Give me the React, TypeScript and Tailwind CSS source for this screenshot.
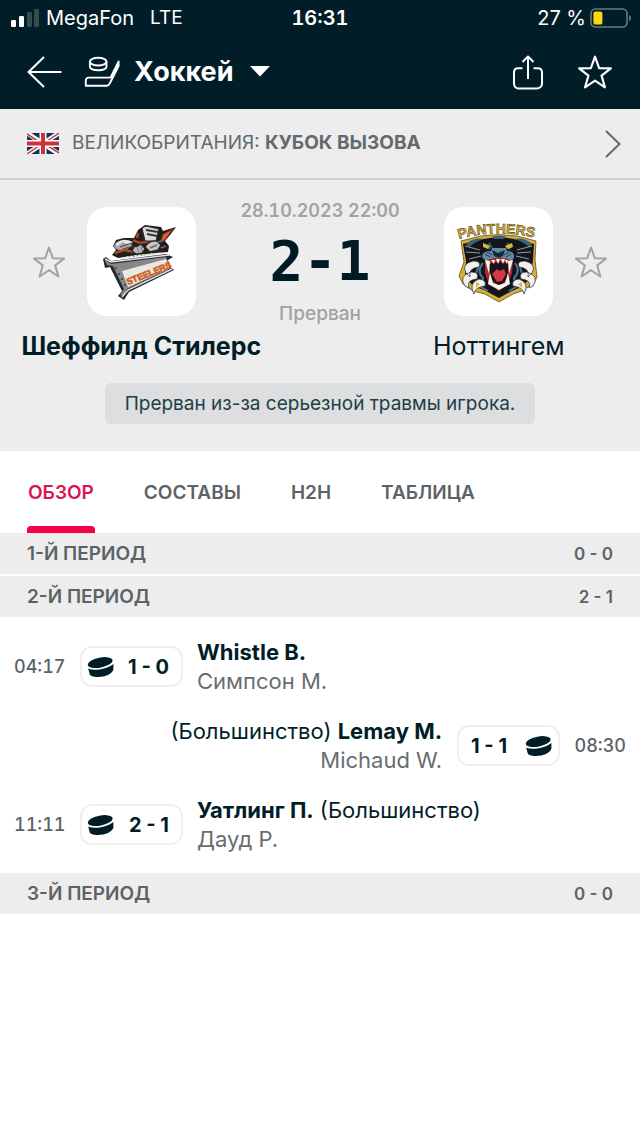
import React from "react";

const STAR = "M17 2.5 L20.9 13.3 L32 13.6 L23.2 20.4 L26.4 31.5 L17 25.1 L7.6 31.5 L10.8 20.4 L2 13.6 L13.1 13.3 Z";

function StarIcon({ className }: { className: string }) {
  return (
    <svg viewBox="0 0 34 34" className={className} fill="none" stroke="currentColor" aria-hidden="true">
      <path d={STAR} strokeLinejoin="round" />
    </svg>
  );
}

function Puck() {
  return (
    <svg viewBox="0 0 28 22" className="h-[22px] w-7 shrink-0" fill="#011e28" aria-hidden="true">
      <ellipse cx="13.2" cy="6.6" rx="12.6" ry="5" transform="rotate(-11 13.2 6.6)" />
      <path d="M1.2 12.6 C6 15.2 20 13.4 26.4 8 L26.4 13.5 C25.5 18 18 21 11 21 C6 21 3 20 2.6 18 Z" />
    </svg>
  );
}

function StatusBar() {
  return (
    <div className="grid h-9 grid-cols-[1fr_auto_1fr] items-center text-[20px] leading-6">
      <div className="flex items-center pl-[11px]">
        <svg viewBox="0 0 29 18" className="h-[18px] w-[29px]" fill="#fff" aria-hidden="true">
          <rect x="0" y="11" width="5" height="7" rx="1.3" />
          <rect x="8" y="7" width="5" height="11" rx="1.3" />
          <rect x="16" y="3" width="5" height="15" rx="1.3" opacity=".2" />
          <rect x="23" y="0" width="5" height="18" rx="1.3" opacity=".2" />
        </svg>
        <span className="ml-1.5">MegaFon</span>
        <span className="ml-4 text-[19px]">LTE</span>
      </div>
      <span className="font-semibold tabular-nums">16:31</span>
      <div className="flex items-center justify-end pr-2">
        <span className="mr-1">27 %</span>
        <svg viewBox="0 0 42 20" className="h-5 w-[42px]" aria-hidden="true">
          <rect x="1" y="1" width="36" height="18" rx="4.5" fill="none" stroke="#687a80" strokeWidth="1.6" />
          <rect x="3.4" y="3.4" width="9" height="13.2" rx="2.2" fill="#ffd60a" />
          <path d="M39 7 Q41 7.5 41 10 Q41 12.5 39 13 Z" fill="#687a80" />
        </svg>
      </div>
    </div>
  );
}

function NavBar() {
  return (
    <div className="flex h-[73px] items-center px-[27px] pb-0.5">
      <button aria-label="Назад">
        <svg viewBox="0 0 36 32" className="h-8 w-9" fill="none" stroke="#fff" strokeWidth="2" aria-hidden="true">
          <path d="M34.5 16 H1.5 M17 1 L1.5 16 L17 31" />
        </svg>
      </button>
      <button className="ml-[21px] flex items-center">
        <svg viewBox="0 0 38 32" className="h-8 w-[38px]" fill="none" stroke="#fff" strokeWidth="1.9" strokeLinejoin="round" aria-hidden="true">
          <ellipse cx="14.2" cy="5.6" rx="8.3" ry="3.9" />
          <path d="M5.9 5.6 V10.6 C6.5 15.4 22 15.4 22.5 10.6 V5.6" />
          <path d="M34.6 5.5 L26.5 21.6 H4.8 C2.6 21.6 1.8 23 1.8 24.6 V29.8 H23 C24.8 29.8 25.2 28.6 26 27 L34.6 10 Z" />
        </svg>
        <span className="ml-3 text-[27px] leading-8 font-bold">Хоккей</span>
        <svg viewBox="0 0 20 11" className="ml-4 h-[11px] w-5" fill="#fff" aria-hidden="true">
          <path d="M0 0 H20 L10 10.5 Z" />
        </svg>
      </button>
      <div className="ml-auto flex items-center gap-[33px]">
        <button aria-label="Поделиться">
          <svg viewBox="0 0 32 36" className="h-9 w-8" fill="none" stroke="#fff" strokeWidth="2" strokeLinejoin="round" aria-hidden="true">
            <path d="M10.5 14.3 H6 Q2 14.3 2 18.5 V30 Q2.5 34 6 34.5 H25 Q29.5 34 30 30 V18.5 Q30 14.3 25.5 14.3 H21.5" />
            <path d="M16 25 V3 M10.5 8 L16 2.5 L21.5 8" />
          </svg>
        </button>
        <button aria-label="В избранное">
          <StarIcon className="h-9 w-9 stroke-2" />
        </button>
      </div>
    </div>
  );
}

function Flag() {
  return (
    <svg viewBox="0 0 32 21" className="h-[21px] w-8 shrink-0" aria-hidden="true">
      <rect width="32" height="21" fill="#12335f" />
      <path d="M0 0 L32 21 M32 0 L0 21" stroke="#fff" strokeWidth="4.6" />
      <path d="M0 1 L14 10 M32 20 L18 11 M32 0 L18 9.5 M0 21 L14 11.5" stroke="#c8413f" strokeWidth="1.5" />
      <path d="M16 0 V21 M0 10.5 H32" stroke="#fff" strokeWidth="7" />
      <path d="M16 0 V21 M0 10.5 H32" stroke="#cc3336" strokeWidth="4" />
    </svg>
  );
}

function SteelersLogo() {
  return (
    <svg viewBox="0 1 84 80" className="h-20 w-[84px]" role="img" aria-label="Шеффилд Стилерс">
      <path d="M12 34 L16 29 L13 25 L16 19 L24 17 L34 17 L38 9 L45 4 L61 6 L63 10 L76 6 L70 14 L65 20 L69 25 L68 31 L48 33 L18 37 Z" fill="#241d1c" />
      <ellipse cx="23" cy="24" rx="9" ry="5" fill="#a9a9ac" transform="rotate(-10 23 24)" />
      <path d="M16 23 Q23 16 33 21 L29 24 L23 21 L17 25 Z" fill="#ece9e5" />
      <path d="M20 26 L32 22 M23 28 L34 25" stroke="#4b4747" strokeWidth="1.2" />
      <path d="M15 32 L24 29 L34 31 M33 19 L40 22 L50 20 M38 12 L37 17" stroke="#ad4a25" strokeWidth="2.4" fill="none" />
      <path d="M42 7 L46 5 L59 8 L56 20 L45 20 Z" fill="#dadadb" stroke="#252426" />
      <path d="M46 9 L58 11 M47 13 L57 15" stroke="#363337" strokeWidth="1.8" />
      <path d="M63 13 L73 8 L65 19 L60 22 Z" fill="#d96129" stroke="#622b19" />
      <path d="M45 26 Q49 19 57 20 L61 24 L58 29 L50 31 Z" fill="#c6c5c6" stroke="#282526" strokeWidth="1.4" />
      <path d="M50 27 L57 24 M58 21 L64 19 M61 27 L66 25" stroke="#6e6b6d" strokeWidth="1.8" />
      <path d="M32 30 L34 26 L38 25 L41 23 L45 28 L42 32 L36 33 Z" fill="#b8b9bc" stroke="#262528" strokeWidth="1.2" />
      <path d="M37 26 L39 31 M41 25 L42 30" stroke="#777a7e" />
      <path d="M22 37 L34 35 L62 32" stroke="#ece8e1" strokeWidth="1.5" strokeDasharray="3 1" />
      <path d="M3 38 L6 36 L11 40 L66 33 L73 36 L68 39 L70 46 L74 49 L29 71 L24 79 L18 75 L22 70 L10 46 L5 47 Z" fill="#24282b" />
      <path d="M5 39 L11 43 L66 36 L71 47 L27 68 L23 75 L20 74 L24 68 L13 45 L7 44 Z" fill="#85898b" />
      <path d="M5 38 L11 41 L69 34 M22 76 L28 69 L72 48" stroke="#dfe1e2" strokeWidth="1.5" fill="none" />
      <path d="M22 50 L66 38 L70 47 L28 66 Z" fill="#ebe8e2" />
      <text x="28" y="64" transform="rotate(-22 28 64)" fill="#eb6c20" stroke="#c45616" strokeWidth=".6" fontFamily="Liberation Sans Narrow, Liberation Sans, sans-serif" fontWeight="700" fontSize="9">STEELERS</text>
      <g fill="#35383a"><circle cx="16" cy="47" r="1" /><circle cx="19" cy="53" r="1" /><circle cx="22" cy="58" r="1" /><circle cx="25" cy="64" r="1" /></g>
    </svg>
  );
}

function PanthersLogo() {
  return (
    <svg viewBox="0 0 86 90" className="h-[90px] w-[86px]" role="img" aria-label="Ноттингем">
      <defs><path id="arch" d="M3 22 Q43 11 84 22" /></defs>
      <path d="M5 24 Q43 11 80 24 L79 43 L81 60 L78 66 L66 74 L57 77 L43 85 L29 77 L17 74 L7 67 L3 59 L8 45 Z" fill="#d8ad3a" stroke="#5d4c1d" strokeWidth=".8" />
      <path d="M7 27 Q43 14 78 27 L77 43 L75 61 L65 70 L56 74 L43 81 L28 73 L17 69 L9 59 L10 44 Z" fill="#12151b" />
      <path d="M10 27 Q18 20 28 22 Q20 24 13 30 Z M76 27 Q68 20 58 22 Q66 24 73 30 Z M35 20 Q43 17 51 20 L47 22 H39 Z" fill="#3d617b" />
      <path d="M29 29 L34 25 L37 30 L33 33 Z M57 29 L52 25 L49 30 L53 33 Z" fill="#314b60" />
      <path d="M27 26 L34 29 L32 32 L27 30 Z M56 26 L49 29 L52 32 L57 30 Z" fill="#d3ba3c" />
      <path d="M26 40 Q26 34 35 34 L36 31 H50 L51 34 Q59 34 58 41 L54 45 Q42 39 31 45 Z" fill="#6089a4" />
      <path d="M36 33 L42 36 L49 33 L47 39 L43 41 L38 39 Z" fill="#182a39" />
      <path d="M29 37 L34 40 M31 35 L36 38 M55 37 L50 40 M53 35 L48 38" stroke="#24394b" />
      <path d="M27 46 Q20 54 27 61 L25 70 L32 74 M59 46 Q65 54 58 61 L60 70 L53 74 M22 50 L19 60 M64 50 L67 60" stroke="#4d7592" strokeWidth="2" fill="none" />
      <path d="M24 33 L9 29 M24 36 L10 35 M25 39 L13 42 M61 33 L76 29 M61 36 L75 35 M60 39 L73 42" stroke="#b8beb9" strokeWidth=".8" />
      <path d="M29 44 Q42 37 57 44 L56 56 L52 67 L43 74 L33 67 L29 56 Z" fill="#ac2932" />
      <path d="M33 47 Q43 43 53 47 L51 62 L43 70 L35 62 Z" fill="#19141a" />
      <path d="M36 57 L41 52 L44 54 L48 52 L50 57 L46 64 L41 65 Z" fill="#d63943" />
      <path d="M29 43 L34 44 L33 57 Z M52 44 L57 43 L53 57 Z M35 43 H39 L38 47 Z M40 42 H44 L42 47 Z M45 42 H49 L47 47 Z M49 43 H52 L51 47 Z M32 67 L34 56 L37 66 L43 68 L49 66 L52 56 L54 67 L43 73 Z" fill="#f9f6ec" />
      <path d="M17 44 Q5 47 10 56 L14 60 Q12 51 23 50 Q26 44 17 44 M15 55 Q2 59 9 69 L13 71 Q10 63 21 62 Q24 55 15 55 M23 62 Q12 66 18 77 Q19 70 29 69 Q31 63 23 62 M69 44 Q81 47 76 56 L72 60 Q74 51 63 50 Q60 44 69 44 M71 55 Q84 59 77 69 L73 71 Q76 63 65 62 Q62 55 71 55 M63 62 Q74 66 68 77 Q67 70 57 69 Q55 63 63 62" fill="#f0f1ee" stroke="#272a2d" strokeWidth=".7" />
      <path d="M20 65 L24 67 L20 71 Z M66 65 L62 67 L66 71 Z" fill="#e0b538" />
      <text fill="#dbb43c" stroke="#5a4817" strokeWidth=".6" fontFamily="Liberation Sans, sans-serif" fontWeight="700" fontSize="14"><textPath href="#arch">PANTHERS</textPath></text>
    </svg>
  );
}

function MatchSummary() {
  return (
    <section className="bg-[#ededed] pb-[27px]">
      <div className="flex items-start justify-between px-8 pt-[19px] text-[#a0a2a3]">
        <div className="flex items-center gap-[21px] pt-2">
          <button aria-label="Следить за Шеффилд Стилерс"><StarIcon className="h-[34px] w-[34px] stroke-2" /></button>
          <div className="flex h-[109px] w-[109px] items-center justify-center rounded-[20px] bg-white"><SteelersLogo /></div>
        </div>
        <div className="flex flex-col items-center text-center">
          <time className="text-[18px] leading-6 font-semibold tabular-nums">28.10.2023 22:00</time>
          <strong className="font-['DejaVu_Sans_Mono',monospace] text-[56px] leading-[76px] font-bold text-[#011b24]">2-1</strong>
          <span className="mt-[3px] text-[19px] leading-6 font-medium">Прерван</span>
        </div>
        <div className="flex items-center gap-[21px] pt-2">
          <div className="flex h-[109px] w-[109px] items-center justify-center rounded-[20px] bg-white"><PanthersLogo /></div>
          <button aria-label="Следить за Ноттингем"><StarIcon className="h-[34px] w-[34px] stroke-2" /></button>
        </div>
      </div>
      <div className="mt-1 grid grid-cols-2 gap-[75px] text-center text-[25px] leading-8 whitespace-nowrap text-[#011e28]">
        <h1 className="flex justify-center font-bold">Шеффилд Стилерс</h1>
        <h2 className="flex justify-center">Ноттингем</h2>
      </div>
      <div className="mt-[21px] flex justify-center">
        <p className="rounded-md bg-[#dcdee0] px-5 py-2 text-[19px] leading-[25px] text-[#233d46]">Прерван из-за серьезной травмы игрока.</p>
      </div>
    </section>
  );
}

function Tabs() {
  const tabs = ["ОБЗОР", "СОСТАВЫ", "H2H", "ТАБЛИЦА"];
  return (
    <nav className="flex h-[82px] gap-12 px-[27px] text-[19px] font-semibold text-[#5b6367]">
      {tabs.map((tab, i) => (
        <button key={tab} className={i === 0 ? "flex flex-col justify-between text-[#dc1450]" : "flex flex-col justify-between"}>
          <span className="px-px pt-[30px] leading-6">{tab}</span>
          {i === 0 && <span className="h-[7px] w-full rounded-t bg-[#f50045]" />}
        </button>
      ))}
    </nav>
  );
}

function Period({ name, score }: { name: string; score: string }) {
  return (
    <h3 className="flex h-[41px] items-center justify-between bg-[#ededed] px-[27px] pt-0.5 text-[19px] font-semibold text-[#5b6367]">
      <span>{name}</span>
      <span className="text-[17px]">{score}</span>
    </h3>
  );
}

type Goal = { time: string; score: string; scorer: string; assist: string; note?: string; away?: boolean };

function GoalRow({ time, score, scorer, assist, note, away }: Goal) {
  return (
    <li className={away ? "flex h-[79px] flex-row-reverse items-center px-[14px]" : "flex h-[79px] items-center px-[14px]"}>
      <time className={away ? "w-[66px] text-right text-[18px] font-medium text-[#5b6367] tabular-nums" : "w-[66px] text-[18px] font-medium text-[#5b6367] tabular-nums"}>{time}</time>
      <div className={away ? "flex h-[41px] w-[103px] flex-row-reverse items-center justify-between rounded-xl border-2 border-[#efefef] pr-[5px] pl-3" : "flex h-[41px] w-[103px] items-center justify-between rounded-xl border-2 border-[#efefef] pr-3 pl-[5px]"}>
        <Puck />
        <span className="text-[20px] font-bold text-[#011e28]">{score}</span>
      </div>
      <div className={away ? "mr-[15px] text-right text-[22px] leading-[29px]" : "ml-[14px] text-[22px] leading-[29px]"}>
        <p className="text-[#011e28]">
          {away && note && <span>{note} </span>}
          <strong className="font-bold">{scorer}</strong>
          {!away && note && <span> {note}</span>}
        </p>
        <p className="text-[#686d70]">{assist}</p>
      </div>
    </li>
  );
}

const goals: Goal[] = [
  { time: "04:17", score: "1 - 0", scorer: "Whistle B.", assist: "Симпсон М." },
  { time: "08:30", score: "1 - 1", scorer: "Lemay M.", assist: "Michaud W.", note: "(Большинство)", away: true },
  { time: "11:11", score: "2 - 1", scorer: "Уатлинг П.", assist: "Дауд Р.", note: "(Большинство)" },
];

export default function App() {
  return (
    <div className="min-h-screen bg-white font-['Inter',sans-serif]">
      <header className="bg-[#011e28] text-white">
        <StatusBar />
        <NavBar />
      </header>
      <a href="#league" className="flex h-[71px] items-center border-b-2 border-[#cdd0d1] bg-[#ededed] px-[27px] text-[19px] text-[#636a6d]">
        <Flag />
        <span className="ml-[13px]">ВЕЛИКОБРИТАНИЯ: <strong className="font-bold">КУБОК ВЫЗОВА</strong></span>
        <svg viewBox="0 0 16 28" className="-mr-2 ml-auto h-7 w-4" fill="none" stroke="currentColor" strokeWidth="2" aria-hidden="true">
          <path d="M1 1 L14.5 14 L1 27" />
        </svg>
      </a>
      <MatchSummary />
      <Tabs />
      <main>
        <Period name="1-Й ПЕРИОД" score="0 - 0" />
        <div className="mt-0.5"><Period name="2-Й ПЕРИОД" score="2 - 1" /></div>
        <ul className="pt-[10px] pb-[9px]">
          {goals.map((goal) => <GoalRow key={goal.time} {...goal} />)}
        </ul>
        <Period name="3-Й ПЕРИОД" score="0 - 0" />
      </main>
    </div>
  );
}
